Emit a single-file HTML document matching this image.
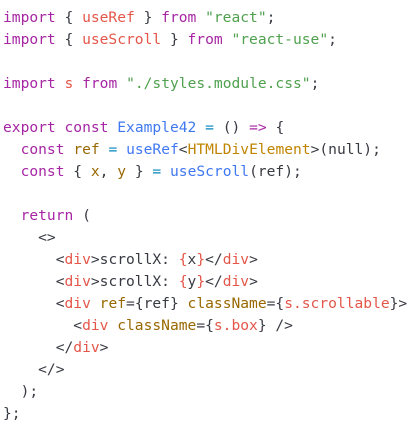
<!DOCTYPE html>
<html><head><style>
body{margin:0;background:#fff;width:410px;height:430px;overflow:hidden}
pre{margin:0;padding:7px 0 0 3px;font-family:"DejaVu Sans Mono","Liberation Mono",monospace;font-size:14.6px;line-height:22px;color:#383a42;white-space:pre}
.k{color:#a626a4}.r{color:#e45649}.g{color:#50a14f}.b{color:#4078f2}.y{color:#986801}.c{color:#0184bc}.o{color:#c18401}
</style></head><body><pre><span class="k">import</span> { <span class="r">useRef</span> } <span class="k">from</span> <span class="g">"react"</span>;
<span class="k">import</span> { <span class="r">useScroll</span> } <span class="k">from</span> <span class="g">"react-use"</span>;

<span class="k">import</span> <span class="r">s</span> <span class="k">from</span> <span class="g">"./styles.module.css"</span>;

<span class="k">export</span> <span class="k">const</span> <span class="b">Example42</span> <span class="c">=</span> () <span class="k">=&gt;</span> {
  <span class="k">const</span> <span class="y">ref</span> <span class="c">=</span> <span class="b">useRef</span>&lt;<span class="o">HTMLDivElement</span>&gt;(null);
  <span class="k">const</span> { <span class="y">x</span>, <span class="y">y</span> } <span class="c">=</span> <span class="b">useScroll</span>(ref);

  <span class="k">return</span> (
    &lt;&gt;
      &lt;<span class="r">div</span>&gt;scrollX: <span class="r">{</span>x<span class="r">}</span>&lt;/<span class="r">div</span>&gt;
      &lt;<span class="r">div</span>&gt;scrollX: <span class="r">{</span>y<span class="r">}</span>&lt;/<span class="r">div</span>&gt;
      &lt;<span class="r">div</span> <span class="y">ref</span>={ref} <span class="y">className</span>={<span class="r">s.scrollable</span>}&gt;
        &lt;<span class="r">div</span> <span class="y">className</span>={<span class="r">s.box</span>} /&gt;
      &lt;/<span class="r">div</span>&gt;
    &lt;/&gt;
  );
};</pre></body></html>
